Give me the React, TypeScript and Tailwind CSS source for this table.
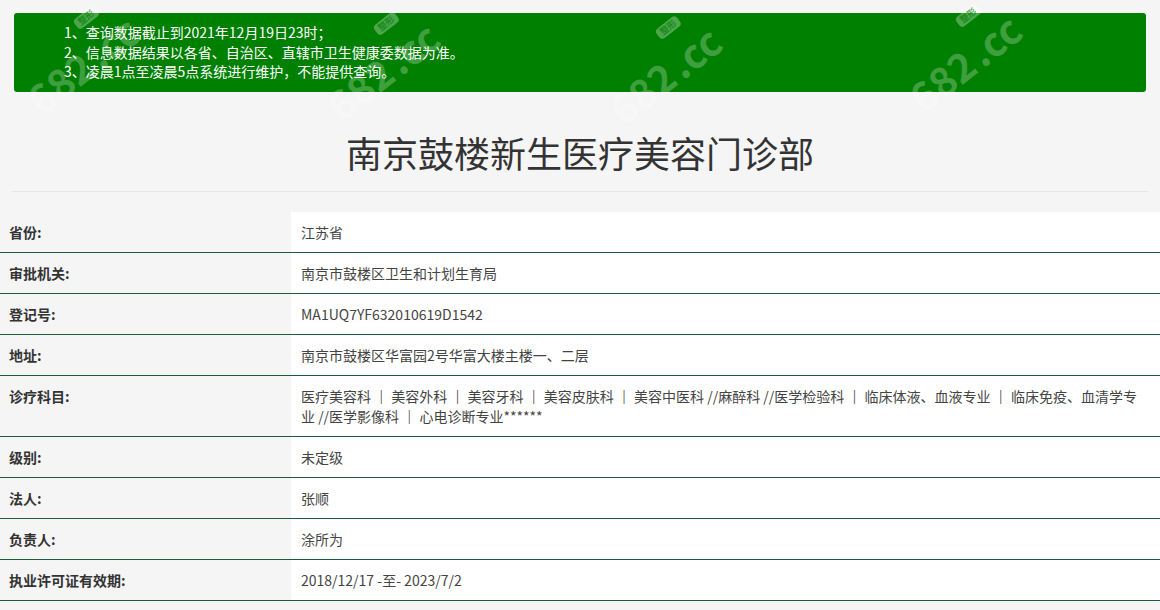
const notices = [
  "1、查询数据截止到2021年12月19日23时；",
  "2、信息数据结果以各省、自治区、直辖市卫生健康委数据为准。",
  "3、凌晨1点至凌晨5点系统进行维护，不能提供查询。",
];

const rows: [string, string][] = [
  ["省份:", "江苏省"],
  ["审批机关:", "南京市鼓楼区卫生和计划生育局"],
  ["登记号:", "MA1UQ7YF632010619D1542"],
  ["地址:", "南京市鼓楼区华富园2号华富大楼主楼一、二层"],
  [
    "诊疗科目:",
    "医疗美容科 ｜ 美容外科 ｜ 美容牙科 ｜ 美容皮肤科 ｜ 美容中医科 //麻醉科 //医学检验科 ｜ 临床体液、血液专业 ｜ 临床免疫、血清学专业 //医学影像科 ｜ 心电诊断专业******",
  ],
  ["级别:", "未定级"],
  ["法人:", "张顺"],
  ["负责人:", "涂所为"],
  ["执业许可证有效期:", "2018/12/17 -至- 2023/7/2"],
];

const marks = [
  { left: 18, top: 44 },
  { left: 318, top: 50 },
  { left: 600, top: 54 },
  { left: 900, top: 42 },
];

function Watermark({ left, top }: { left: number; top: number }) {
  return (
    <div
      className="pointer-events-none absolute flex items-end gap-1 text-[40px] font-bold leading-none text-white/25"
      style={{ left, top, transform: "rotate(-38deg)" }}
    >
      <span>682</span>
      <span className="relative">
        .cc
        <span className="absolute -top-5 left-2 rounded-sm bg-white/30 px-1 text-[9px] leading-[12px] text-[#008000]/70">
          整形
        </span>
      </span>
    </div>
  );
}

// the bars between departments are drawn darker than the text
function Value({ text }: { text: string }) {
  const parts = text.split("｜");
  return (
    <>
      {parts.map((p, i) => (
        <span key={i}>
          {i > 0 && <span className="font-bold text-[#222]">｜</span>}
          {p}
        </span>
      ))}
    </>
  );
}

export default function App() {
  return (
    <div
      className="relative min-h-[610px] overflow-hidden bg-[#f5f5f5] text-[14px] text-[#333]"
      style={{ fontFamily: '"Noto Sans CJK SC", "Noto Sans", sans-serif' }}
    >
      <div className="px-[14px] pt-[13px]">
        <div className="rounded-[3px] bg-[#008000] py-[10px] pl-[50px] text-white">
          {notices.map((n) => (
            <p key={n} className="leading-[19.5px]">
              {n}
            </p>
          ))}
        </div>
      </div>

      <h1 className="pt-[36px] pb-[15px] text-center text-[36px] leading-[48px] text-[#333]">南京鼓楼新生医疗美容门诊部</h1>
      <div className="mx-[12px] border-t border-[#e6e6e6]" />

      <div className="mt-[20px]">
        {rows.map(([label, value]) => (
          <div key={label} className="flex border-b border-[#1f5a3f]">
            <div className="w-[291px] shrink-0 py-[10px] pl-[9px] font-bold leading-[20px] text-[#333]">{label}</div>
            <div className="flex-1 bg-white py-[10px] pr-[10px] pl-[10px] leading-[20px] text-[#444]">
              <Value text={value} />
            </div>
          </div>
        ))}
      </div>

      {marks.map((m, i) => (
        <Watermark key={i} left={m.left} top={m.top} />
      ))}
    </div>
  );
}
